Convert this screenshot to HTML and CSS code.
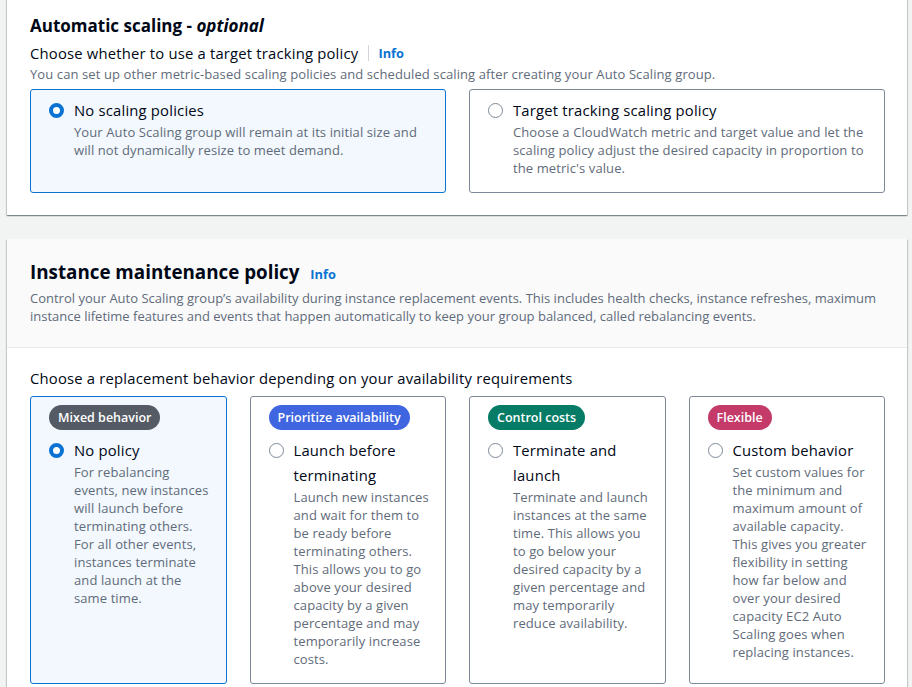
FILE: index.html
```html
<!DOCTYPE html>
<html lang="en">
<head>
<meta charset="utf-8">
<title>Auto Scaling</title>
<link rel="stylesheet" href="styles.css">
</head>
<body>
<div class="page">
  <section class="container first">
    <div class="body">
      <h2 class="h2 small">Automatic scaling - <i>optional</i></h2>
      <div class="field-label">
        <span>Choose whether to use a target tracking policy</span>
        <span class="divider"></span>
        <a class="info">Info</a>
      </div>
      <p class="field-desc">You can set up other metric-based scaling policies and scheduled scaling after creating your Auto Scaling group.</p>
      <div class="grid two">
        <div class="tile selected">
          <div class="radio-row">
            <span class="radio on"></span>
            <div class="radio-text">
              <div class="label">No scaling policies</div>
              <div class="desc">Your Auto Scaling group will remain at its initial size and will not dynamically resize to meet demand.</div>
            </div>
          </div>
        </div>
        <div class="tile">
          <div class="radio-row">
            <span class="radio"></span>
            <div class="radio-text">
              <div class="label">Target tracking scaling policy</div>
              <div class="desc">Choose a CloudWatch metric and target value and let the scaling policy adjust the desired capacity in proportion to the metric's value.</div>
            </div>
          </div>
        </div>
      </div>
    </div>
  </section>

  <section class="container second">
    <header class="header">
      <h2 class="h2">Instance maintenance policy <a class="info">Info</a></h2>
      <p class="header-desc">Control your Auto Scaling group’s availability during instance replacement events. This includes health checks, instance refreshes, maximum instance lifetime features and events that happen automatically to keep your group balanced, called rebalancing events.</p>
    </header>
    <div class="body body2">
      <div class="field-label plain">Choose a replacement behavior depending on your availability requirements</div>
      <div class="grid four">
        <div class="tile selected">
          <span class="badge grey">Mixed behavior</span>
          <div class="radio-row">
            <span class="radio on"></span>
            <div class="radio-text">
              <div class="label">No policy</div>
              <div class="desc">For rebalancing events, new instances will launch before terminating others. For all other events, instances terminate and launch at the same time.</div>
            </div>
          </div>
        </div>
        <div class="tile">
          <span class="badge blue">Prioritize availability</span>
          <div class="radio-row">
            <span class="radio"></span>
            <div class="radio-text">
              <div class="label">Launch before terminating</div>
              <div class="desc">Launch new instances and wait for them to be ready before terminating others. This allows you to go above your desired capacity by a given percentage and may temporarily increase costs.</div>
            </div>
          </div>
        </div>
        <div class="tile">
          <span class="badge green">Control costs</span>
          <div class="radio-row">
            <span class="radio"></span>
            <div class="radio-text">
              <div class="label">Terminate and launch</div>
              <div class="desc">Terminate and launch instances at the same time. This allows you to go below your desired capacity by a given percentage and may temporarily reduce availability.</div>
            </div>
          </div>
        </div>
        <div class="tile">
          <span class="badge red">Flexible</span>
          <div class="radio-row">
            <span class="radio"></span>
            <div class="radio-text">
              <div class="label">Custom behavior</div>
              <div class="desc">Set custom values for the minimum and maximum amount of available capacity. This gives you greater flexibility in setting how far below and over your desired capacity EC2 Auto Scaling goes when replacing instances.</div>
            </div>
          </div>
        </div>
      </div>
    </div>
  </section>
</div>
</body>
</html>
```

FILE: styles.css
```css
* { box-sizing: border-box; }
html, body { margin: 0; padding: 0; }
body {
  background: #f2f3f3;
  font-family: "Open Sans", Roboto, sans-serif;
  color: #000716;
  overflow: hidden;
}
.page {
  padding: 0 5px 0 7px;
  margin-top: -10px;
}
.container {
  background: #ffffff;
  box-shadow: 0 1px 1px 0 rgba(0, 28, 36, 0.3), 1px 1px 1px 0 rgba(0, 28, 36, 0.15), -1px 1px 1px 0 rgba(0, 28, 36, 0.15);
}
.container.second { margin-top: 24px; }
.body { padding: 23px 22px 22px 23px; }
.first .body { padding-top: 24px; padding-bottom: 22px; }
.h2 {
  margin: 0;
  font-size: 18.8px;
  line-height: 24px;
  font-weight: 700;
}
.h2.small { font-size: 17px; }
.h2 i { font-weight: 700; }
.info {
  color: #0972d3;
  font-weight: 700;
  font-size: 12.8px;
  letter-spacing: 0;
  margin-left: 6px;
}
.field-label {
  display: flex;
  align-items: center;
  margin-top: 4px;
  font-size: 14.8px;
  letter-spacing: 0.2px;
  line-height: 22px;
}
.field-label .divider {
  width: 1px;
  height: 16px;
  background: #d1d5db;
  margin: 0 3px 0 10px;
}
.field-label.plain { margin-top: 0; }
.field-desc, .header-desc {
  margin: 0;
  font-size: 13px;
  letter-spacing: 0.1px;
  line-height: 18px;
  color: #5f6b7a;
}
.field-desc { margin-top: 1px; }
.grid {
  display: grid;
  gap: 23px;
  margin-top: 6px;
}
.grid.two { grid-template-columns: 1fr 1fr; }
.grid.four { grid-template-columns: repeat(4, 1fr); margin-top: 7px; }
.tile {
  border: 1px solid #7d8998;
  border-radius: 3px;
  padding: 8px 14px 15px 18px;
}
.tile.selected {
  border-color: #0972d3;
  background: #f2f8fd;
}
.radio-row {
  display: flex;
  gap: 10px;
}
.radio {
  flex: none;
  width: 15px;
  height: 15px;
  margin-top: 5px;
  border-radius: 50%;
  border: 1.5px solid #7d8998;
  background: #fff;
}
.radio.on {
  border: 4.5px solid #0972d3;
}
.label {
  font-size: 14.8px;
  letter-spacing: 0.2px;
  line-height: 25px;
}
.desc {
  font-size: 13px;
  letter-spacing: 0.1px;
  line-height: 18px;
  color: #5f6b7a;
}
.badge {
  display: inline-block;
  height: 25px;
  line-height: 25px;
  padding: 0 9px;
  border-radius: 13px;
  color: #ffffff;
  font-size: 12.5px;
  font-weight: 600;
  margin-bottom: 8px;
}
.badge.grey { background: #545b64; }
.badge.blue { background: #3f66e0; }
.badge.green { background: #067b66; }
.badge.red { background: #c43b69; }
.header {
  background: #fafafa;
  border-bottom: 1px solid #e9ebed;
  padding: 21px 22px 22px 23px;
}
.header-desc { margin-top: 3px; letter-spacing: 0; }
.body2 { padding-top: 19px; }
```
